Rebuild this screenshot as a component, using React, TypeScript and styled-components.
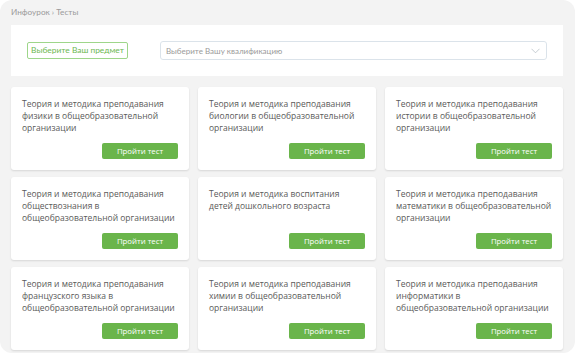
import React from "react";
import styled, { createGlobalStyle } from "styled-components";

const Global = createGlobalStyle`
  html, body { margin: 0; padding: 0; background: #ffffff; }
  * { box-sizing: border-box; }
`;

const Frame = styled.div`
  width: 575px;
  height: 353px;
  background: #f3f3f3;
  border-radius: 12px;
  overflow: hidden;
  padding: 0 12px 0 11px;
  display: flex;
  flex-direction: column;
`;

const Breadcrumb = styled.div`
  height: 25px;
  display: flex;
  align-items: center;
  padding-bottom: 1px;
  font-family: Lato, "Open Sans", sans-serif;
  font-size: 8.2px;
  color: #9a9a9a;
`;

const Panel = styled.div`
  height: 51px;
  background: #ffffff;
  display: flex;
  align-items: center;
  padding: 0 16px;
  gap: 32px;
`;

const SubjectButton = styled.button`
  height: 17px;
  width: 101px;
  padding: 0;
  border: 1px solid #9ed68a;
  border-radius: 2px;
  background: #ffffff;
  color: #6cb751;
  font-family: Lato, "Open Sans", sans-serif;
  font-size: 8.4px;
  white-space: nowrap;
  flex-shrink: 0;
  margin-top: -1px;
`;

const Select = styled.div`
  flex: 1;
  height: 19px;
  border: 1px solid #dbe3ea;
  border-radius: 3px;
  display: flex;
  align-items: center;
  justify-content: space-between;
  padding: 0 6px 0 5px;
  font-family: Lato, "Open Sans", sans-serif;
  font-size: 8px;
  color: #9a9a9a;
`;

const Grid = styled.div`
  margin-top: 11px;
  display: grid;
  grid-template-columns: repeat(3, 178px);
  grid-auto-rows: 83px;
  column-gap: 9px;
  row-gap: 7px;
`;

const Card = styled.div`
  background: #ffffff;
  border-radius: 3px;
  box-shadow: 0 1px 2px rgba(0, 0, 0, 0.12);
  padding: 11px;
  display: flex;
  flex-direction: column;
  justify-content: space-between;
`;

const Title = styled.div`
  font-family: "Open Sans", sans-serif;
  font-size: 8.5px;
  line-height: 12.2px;
  color: #5a5a5a;
`;

const GoButton = styled.button`
  align-self: flex-end;
  flex-shrink: 0;
  width: 76px;
  height: 16px;
  padding: 0;
  border: none;
  border-radius: 2px;
  background: #6ab54b;
  color: #ffffff;
  font-family: "Open Sans", sans-serif;
  font-size: 7.8px;
  white-space: nowrap;
`;

const titles = [
  "Теория и методика преподавания физики в общеобразовательной организации",
  "Теория и методика преподавания биологии в общеобразовательной организации",
  "Теория и методика преподавания истории в общеобразовательной организации",
  "Теория и методика преподавания обществознания в общеобразовательной организации",
  "Теория и методика воспитания детей дошкольного возраста",
  "Теория и методика преподавания математики в общеобразовательной организации",
  "Теория и методика преподавания французского языка в общеобразовательной организации",
  "Теория и методика преподавания химии в общеобразовательной организации",
  "Теория и методика преподавания информатики в общеобразовательной организации",
];

export default function App() {
  return (
    <>
      <Global />
      <Frame>
        <Breadcrumb>Инфоурок › Тесты</Breadcrumb>
        <Panel>
          <SubjectButton>Выберите Ваш предмет</SubjectButton>
          <Select>
            <span>Выберите Вашу квалификацию</span>
            <svg width="9" height="6" viewBox="0 0 9 6">
              <path d="M0.5 0.8 L4.5 4.8 L8.5 0.8" fill="none" stroke="#b8c0c8" strokeWidth="0.8" />
            </svg>
          </Select>
        </Panel>
        <Grid>
          {titles.map((t) => (
            <Card key={t}>
              <Title>{t}</Title>
              <GoButton>Пройти тест</GoButton>
            </Card>
          ))}
        </Grid>
      </Frame>
    </>
  );
}
